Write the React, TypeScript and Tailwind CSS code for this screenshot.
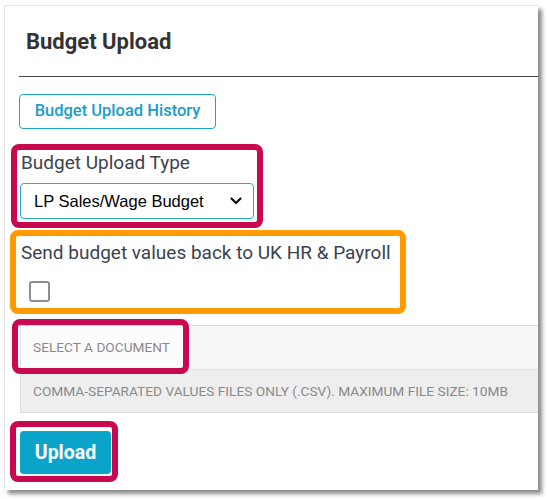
import React from 'react';

const ChevronDown = () => (
  <svg width="14" height="14" viewBox="0 0 14 14" fill="none">
    <path d="M2.5 4.5 L7 9 L11.5 4.5" stroke="#111" strokeWidth="2.2" strokeLinecap="round" strokeLinejoin="round" />
  </svg>
);

export default function App() {
  return (
    <div className="relative w-[547px] h-[499px] bg-white overflow-hidden font-['Roboto',sans-serif]">
      {/* card */}
      <div className="ml-[4px] mt-[5px] w-[534px] h-[485px] bg-white border-l border-t border-[#e4e4e4] shadow-[4px_4px_4px_rgba(0,0,0,0.45)] pl-[14px]">
        <h1 className="pl-[7px] pt-[21px] text-[22px] leading-[30px] font-bold text-[#333333]">Budget Upload</h1>
        <div className="mt-[19px] h-px bg-[#444444]" />

        <button className="mt-[17px] h-[35px] w-[197px] rounded-[4px] border border-[#1fa3cc] text-[16.5px] font-medium text-[#189ecb]">
          Budget Upload History
        </button>

        <div className="mt-[21px] pl-[2px] text-[19px] leading-[25px] text-[#3b4250]">Budget Upload Type</div>
        <div className="mt-[8px] ml-[1px] flex h-[36px] w-[234px] items-center justify-between rounded-[4px] border border-[#2aa8d2] pl-[13px] pr-[10px] font-['Liberation_Sans',Arial,sans-serif] text-[16.5px] text-black">
          <span>LP Sales/Wage Budget</span>
          <ChevronDown />
        </div>

        <div className="mt-[21px] pl-[2px] text-[19px] leading-[25px] text-[#3b4250]">Send budget values back to UK HR &amp; Payroll</div>
        <div className="mt-[16px] ml-[10px] h-[21px] w-[21px] rounded-[3px] border-2 border-[#8f8f8f] bg-white" />

        <div className="mt-[23px] ml-[1px] border border-r-0 border-[#dddddd] text-[#8a8a8a] uppercase">
          <div className="h-[43px] flex items-center pl-[12px] bg-[#f7f7f7] text-[13.7px]">
            <span className="bg-[#fcfcfc] -ml-[12px] pl-[12px] pr-[20px] h-full flex items-center">Select a document</span>
          </div>
          <div className="h-[43px] flex items-center pl-[12px] bg-[#eeeeee] border-t border-[#e2e2e2] text-[13.7px]">
            Comma-separated values files only (.csv). Maximum file size: 10MB
          </div>
        </div>

        <button className="mt-[18px] ml-[1px] h-[43px] w-[91px] rounded-[4px] bg-[#0aa3c9] text-[19.5px] font-bold text-white">
          Upload
        </button>
      </div>

      {/* annotation boxes */}
      <div className="absolute left-[11px] top-[144px] w-[252px] h-[84px] rounded-[8px] border-[6px] border-[#c8084f]" />
      <div className="absolute left-[10px] top-[230px] w-[396px] h-[84px] rounded-[8px] border-[6px] border-[#ff9a00]" />
      <div className="absolute left-[12px] top-[319px] w-[177px] h-[55px] rounded-[8px] border-[6px] border-[#c8084f]" />
      <div className="absolute left-[10px] top-[421px] w-[108px] h-[61px] rounded-[8px] border-[6px] border-[#c8084f]" />
    </div>
  );
}
